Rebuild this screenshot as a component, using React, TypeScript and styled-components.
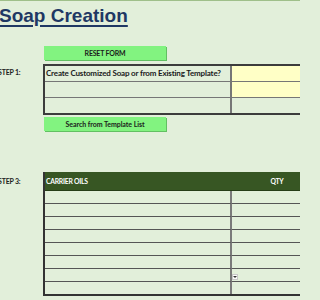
import styled, { createGlobalStyle } from "styled-components";
import { FC, Fragment } from "react";

const GlobalStyle = createGlobalStyle`
  html, body {
    margin: 0;
    padding: 0;
  }
  body {
    background: #e2efda;
    overflow: hidden;
    font-family: Lato, "Open Sans", sans-serif;
  }
`;

const Page = styled.div`
  width: 300px;
  height: 300px;
  overflow: hidden;
  box-sizing: border-box;
  border-top: 1px solid #9fbf8a;
  display: flex;
  flex-direction: column;
`;

const Title = styled.h1`
  margin: 5px 0 0 -1px;
  font: bold 19px/19px "Liberation Sans", Arial, sans-serif;
  color: #1f3864;
  text-decoration: underline;
  text-decoration-thickness: 2px;
  text-underline-offset: 3px;
  white-space: nowrap;
`;

const Line = styled.div<{ $top: number }>`
  display: flex;
  align-items: flex-start;
  margin-top: ${(p) => p.$top}px;
`;

const StepLabel = styled.div<{ $h: number }>`
  flex: 0 0 43px;
  text-indent: -2px;
  font: 700 7px/${(p) => p.$h}px Lato, sans-serif;
  letter-spacing: -0.2px;
  color: #1e1e1e;
  white-space: nowrap;
`;

const ActionButton = styled.button<{ $caps?: boolean }>`
  margin-left: 1px;
  width: 122px;
  height: 14px;
  padding: 0;
  border: none;
  background: #82f380;
  box-shadow: 1px 1px 0 #62c062;
  font: 700 7px/14px Lato, sans-serif;
  letter-spacing: ${(p) => (p.$caps ? -0.2 : -0.05)}px;
  color: #1c1c1c;
  cursor: pointer;
`;

const FormGrid = styled.div`
  display: grid;
  grid-template-columns: 185px 110px;
  grid-auto-rows: 15px;
  row-gap: 1px;
  column-gap: 2px;
  background: #767676;
  border: 2px solid #3c3c3c;
  border-right: none;
`;

const FormCell = styled.div<{ $fill?: string }>`
  background: ${(p) => p.$fill ?? "#e2efda"};
  padding-left: 1px;
  font: 700 8px/15px Lato, sans-serif;
  letter-spacing: -0.17px;
  color: #1a1a1a;
  white-space: nowrap;
  overflow: hidden;
`;

const OilsTable = styled.div`
  display: grid;
  grid-template-columns: 187px 90px;
  border-left: 2px solid #333;
  border-bottom: 2px solid #333;
`;

const HeaderCell = styled.div<{ $align: "left" | "center" }>`
  height: 18px;
  border-bottom: 1px solid #263d17;
  background: #375623;
  color: #ffffff;
  font: 700 6.8px/18px Lato, sans-serif;
  letter-spacing: -0.25px;
  text-align: ${(p) => p.$align};
  padding-left: ${(p) => (p.$align === "left" ? 1 : 0)}px;
`;

const BodyCell = styled.div<{ $split?: boolean; $last?: boolean }>`
  position: relative;
  height: 12px;
  border-bottom: ${(p) => (p.$last ? "none" : "1px solid #555")};
  border-right: ${(p) => (p.$split ? "2px solid #7a7a7a" : "none")};
`;

const DropArrow = styled.div`
  position: absolute;
  left: 0;
  top: 5px;
  width: 6px;
  height: 6px;
  background: #fafafa;
  border: 1px solid #c8c8c8;
  box-sizing: border-box;
  display: flex;
  align-items: center;
  justify-content: center;
`;

const ROWS = 8;

const App: FC = () => {
  return (
    <>
      <GlobalStyle />
      <Page>
        <Title>Soap Creation</Title>

        <Line $top={21}>
          <StepLabel $h={14} />
          <ActionButton $caps>RESET FORM</ActionButton>
        </Line>

        <Line $top={4}>
          <StepLabel $h={17}>STEP 1:</StepLabel>
          <FormGrid>
            <FormCell>Create Customized Soap or from Existing Template?</FormCell>
            <FormCell $fill="#ffffc6" />
            <FormCell />
            <FormCell $fill="#ffffc6" />
            <FormCell />
            <FormCell />
          </FormGrid>
        </Line>

        <Line $top={2}>
          <StepLabel $h={14} />
          <ActionButton>Search from Template List</ActionButton>
        </Line>

        <Line $top={41}>
          <StepLabel $h={19}>STEP 3:</StepLabel>
          <OilsTable>
            <HeaderCell $align="left">CARRIER OILS</HeaderCell>
            <HeaderCell $align="center">QTY</HeaderCell>
            {Array.from({ length: ROWS }).map((_, i) => (
              <Fragment key={i}>
                <BodyCell $split $last={i === ROWS - 1} />
                <BodyCell $last={i === ROWS - 1}>
                  {i === 6 && (
                    <DropArrow>
                      <svg width="4" height="2" viewBox="0 0 4 2">
                        <path d="M0 0h4L2 2z" fill="#333" />
                      </svg>
                    </DropArrow>
                  )}
                </BodyCell>
              </Fragment>
            ))}
          </OilsTable>
        </Line>
      </Page>
    </>
  );
};

export default App;
